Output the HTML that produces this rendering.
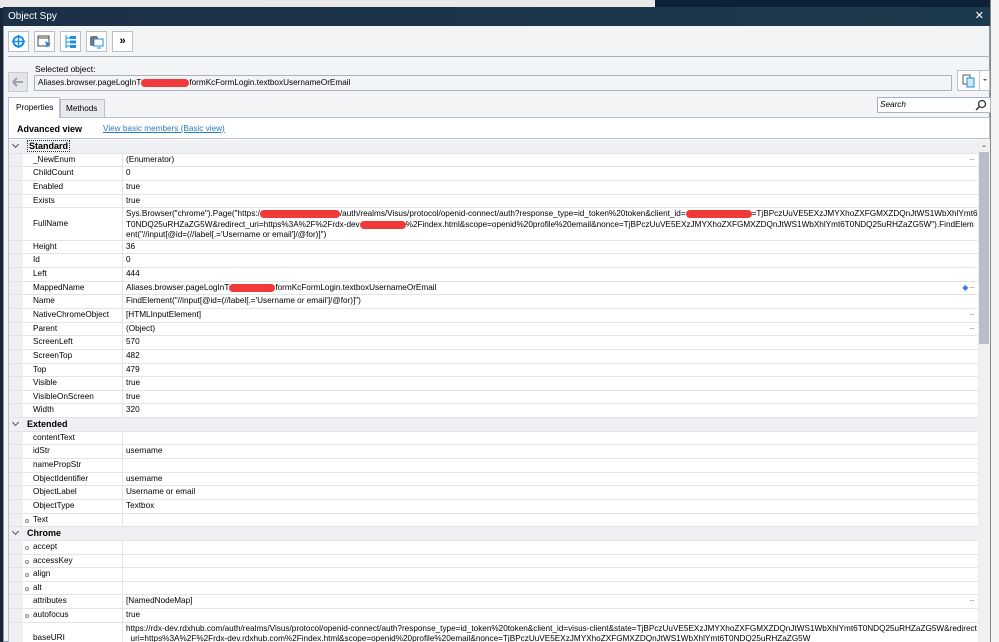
<!DOCTYPE html>
<html><head><meta charset="utf-8">
<style>
*{box-sizing:border-box;margin:0;padding:0}
html{width:999px;height:642px;overflow:hidden}
body{width:999px;height:642px;overflow:hidden;background:#e9e9e9;font-family:"Liberation Sans",Tahoma,sans-serif;font-size:8.2px;color:#000;position:relative}
.abs{position:absolute}
.red{display:inline-block;background:#f03a3a;border-radius:5px;height:8px;vertical-align:middle}
.btn{position:absolute;top:31px;width:21px;height:21px;background:#fff;border:1px solid #b9c0ca}
.grid{position:absolute;left:9px;top:140px;width:969px;height:502px;overflow:hidden}
.row{display:flex;height:13.65px;border-bottom:1px solid #e2e4e8;line-height:12.6px;white-space:nowrap;overflow:hidden}
.row .ind{width:14px;background:#eef0f3;flex:none}
.row .n{width:100px;flex:none;padding-left:10px;background:#fff;border-right:1px solid #e2e4e8;position:relative}
.row .v{flex:1;padding-left:3px;background:#fff;overflow:hidden;position:relative}
.row.tall{height:32.6px}
.row.tall .n{display:flex;align-items:center}
.row.tall .v{line-height:10.5px;padding-top:1px;white-space:normal;word-break:break-all}
.row.hd{background:#eef0f3}
.row.hd .h{font-weight:bold;padding-left:4px;font-size:9px}
.chev{position:absolute;left:4px;top:2px;width:5px;height:5px;border-right:1px solid #555;border-bottom:1px solid #555;transform:rotate(45deg)}
.dot{position:absolute;left:2px;top:5px;width:4px;height:4px;border:1px solid #888;border-radius:50%}
.dots{position:absolute;right:4px;top:0;color:#777;letter-spacing:-1px}
</style></head><body>
<div class="abs" style="left:655px;top:0;width:344px;height:8px;background:#0d2138"></div>
<div class="abs" style="left:0;top:8px;width:8px;height:634px;background:#1a2533"></div>
<div class="abs" style="left:990px;top:0;width:9px;height:642px;background:#f4f4f4;border-left:1px solid #888"></div>
<div class="abs" style="left:3px;top:7px;width:987px;height:635px;background:#f3f4f6;border:1px solid #8a97a6"></div>
<div class="abs" style="left:3px;top:7px;width:987px;height:19px;background:linear-gradient(90deg,#1c3048,#1c3a4d);color:#fff;font-size:10px;line-height:19px;padding-left:5px">Object Spy<span style="position:absolute;right:6px;top:0;font-size:11px">✕</span></div>
<div class="btn" style="left:8px"><svg width="19" height="19" viewBox="0 0 19 19"><circle cx="9.5" cy="9.5" r="5" fill="none" stroke="#1a8fe0" stroke-width="2"/><path d="M9.5 3v13M3 9.5h13" stroke="#1a8fe0" stroke-width="1.5"/></svg></div>
<div class="btn" style="left:34px"><svg width="19" height="19"><rect x="3" y="4" width="11" height="10" fill="none" stroke="#444"/><path d="M3 6h11" stroke="#444"/><path d="M10 9l6 3-3 1-1 3z" fill="#1a8fe0"/></svg></div>
<div class="btn" style="left:60px"><svg width="19" height="19"><path d="M5 3v13M5 6h4M5 10h4M5 14h4" stroke="#1a8fe0"/><rect x="9" y="4" width="6" height="3" fill="#1a8fe0"/><rect x="9" y="8.5" width="6" height="3" fill="#1a8fe0"/><rect x="9" y="13" width="6" height="3" fill="#1a8fe0"/></svg></div>
<div class="btn" style="left:86px"><svg width="19" height="19"><rect x="3" y="4" width="8" height="10" rx="2" fill="#777"/><rect x="7" y="7" width="9" height="7" fill="#fff" stroke="#1a8fe0"/><path d="M10 16h4" stroke="#1a8fe0"/></svg></div>
<div class="btn" style="left:112px;font-size:11px;font-weight:bold;text-align:center;line-height:18px">»</div>
<div class="abs" style="left:8px;top:56px;width:982px;height:1px;background:#a9b3c0"></div>
<div class="abs" style="left:35px;top:64px;font-size:8.5px">Selected object:</div>
<div class="abs" style="left:8px;top:72px;width:20px;height:20px;background:#e3e5e8;border:1px solid #c6cbd2"><svg width="18" height="18"><path d="M4 9h10M4 9l4-4M4 9l4 4" stroke="#9aa3ad" stroke-width="2" fill="none"/></svg></div>
<div class="abs" style="left:34px;top:75px;width:918px;height:16px;background:#f3f4f6;border:1px solid #a9b3c0;line-height:14px;padding-left:3px">Aliases.browser.pageLogInT<span class="red" style="width:48px"></span>formKcFormLogin.textboxUsernameOrEmail</div>
<div class="abs" style="left:957px;top:70px;width:33px;height:21px;background:#fff;border:1px solid #b9c0ca"><svg width="20" height="19" style="position:absolute;left:1px;top:0"><rect x="4" y="4" width="7" height="9" fill="#fff" stroke="#555"/><rect x="8" y="7" width="7" height="9" fill="#cfeaff" stroke="#1a8fe0"/></svg><div style="position:absolute;left:21px;top:0;width:1px;height:19px;background:#ccc"></div><div style="position:absolute;left:25px;top:8px;border:2.5px solid transparent;border-top-color:#555"></div></div>
<div class="abs" style="left:8px;top:97px;width:52px;height:21px;background:#fff;border:1px solid #b9c0ca;border-bottom:none;line-height:20px;padding-left:7px;z-index:2">Properties</div>
<div class="abs" style="left:60px;top:99px;width:45px;height:19px;background:#e8eaed;border:1px solid #b9c0ca;line-height:18px;padding-left:5px">Methods</div>
<div class="abs" style="left:877px;top:97px;width:114px;height:16px;background:#fff;border:1px solid #a9b3c0;font-style:italic;line-height:14px;padding-left:2px">Search<svg width="12" height="12" style="position:absolute;right:3px;top:1px"><circle cx="7" cy="5" r="3.5" fill="none" stroke="#333" stroke-width="1.3"/><path d="M4.5 7.5L1 11" stroke="#333" stroke-width="1.5"/></svg></div>
<div class="abs" style="left:8px;top:117px;width:982px;height:525px;background:#fff;border:1px solid #b9c0ca"></div>
<div class="abs" style="left:17px;top:124px;font-weight:bold;font-size:9px">Advanced view</div>
<div class="abs" style="left:103px;top:124px;color:#2a7bc0;text-decoration:underline">View basic members (Basic view)</div>
<div class="abs" style="left:9px;top:138px;width:980px;height:1px;background:#b9c0ca"></div>
<div class="abs" style="left:978px;top:139px;width:12px;height:503px;background:#f0f0f0"></div>
<div class="abs" style="left:982px;top:143px;border:2.5px solid transparent;border-bottom-color:#888"></div>
<div class="abs" style="left:979px;top:152px;width:10px;height:192px;background:#b9bec6"></div>
<div class="grid">
<div class="row hd"><div class="ind" style="position:relative"><span class="chev"></span></div><div class="h"><span style="border:1px dotted #333;padding:0 1px">Standard</span></div></div>
<div class="row"><div class="ind"></div><div class="n">_NewEnum</div><div class="v">(Enumerator)<span class="dots">···</span></div></div>
<div class="row"><div class="ind"></div><div class="n">ChildCount</div><div class="v">0</div></div>
<div class="row"><div class="ind"></div><div class="n">Enabled</div><div class="v">true</div></div>
<div class="row"><div class="ind"></div><div class="n">Exists</div><div class="v">true</div></div>
<div class="row tall"><div class="ind"></div><div class="n">FullName</div><div class="v">Sys.Browser("chrome").Page("https:/<span class="red" style="width:80px"></span>/auth/realms/Visus/protocol/openid-connect/auth?response_type=id_token%20token&amp;client_id=<span class="red" style="width:66px"></span>=TjBPczUuVE5EXzJMYXhoZXFGMXZDQnJtWS1WbXhlYmt6T0NDQ25uRHZaZG5W&amp;redirect_uri=https%3A%2F%2Frdx-dev<span class="red" style="width:46px"></span>%2Findex.html&amp;scope=openid%20profile%20email&amp;nonce=TjBPczUuVE5EXzJMYXhoZXFGMXZDQnJtWS1WbXhlYmt6T0NDQ25uRHZaZG5W").FindElement("//input[@id=(//label[.='Username or email']/@for)]")</div></div>
<div class="row"><div class="ind"></div><div class="n">Height</div><div class="v">36</div></div>
<div class="row"><div class="ind"></div><div class="n">Id</div><div class="v">0</div></div>
<div class="row"><div class="ind"></div><div class="n">Left</div><div class="v">444</div></div>
<div class="row"><div class="ind"></div><div class="n">MappedName</div><div class="v">Aliases.browser.pageLogInT<span class="red" style="width:46px"></span>formKcFormLogin.textboxUsernameOrEmail<span class="dots"><span style="color:#3a7fe0">◆</span> ···</span></div></div>
<div class="row"><div class="ind"></div><div class="n">Name</div><div class="v">FindElement("//input[@id=(//label[.='Username or email']/@for)]")</div></div>
<div class="row"><div class="ind"></div><div class="n">NativeChromeObject</div><div class="v">[HTMLInputElement]<span class="dots">···</span></div></div>
<div class="row"><div class="ind"></div><div class="n">Parent</div><div class="v">(Object)<span class="dots">···</span></div></div>
<div class="row"><div class="ind"></div><div class="n">ScreenLeft</div><div class="v">570</div></div>
<div class="row"><div class="ind"></div><div class="n">ScreenTop</div><div class="v">482</div></div>
<div class="row"><div class="ind"></div><div class="n">Top</div><div class="v">479</div></div>
<div class="row"><div class="ind"></div><div class="n">Visible</div><div class="v">true</div></div>
<div class="row"><div class="ind"></div><div class="n">VisibleOnScreen</div><div class="v">true</div></div>
<div class="row"><div class="ind"></div><div class="n">Width</div><div class="v">320</div></div>
<div class="row hd"><div class="ind" style="position:relative"><span class="chev"></span></div><div class="h">Extended</div></div>
<div class="row"><div class="ind"></div><div class="n">contentText</div><div class="v"></div></div>
<div class="row"><div class="ind"></div><div class="n">idStr</div><div class="v">username</div></div>
<div class="row"><div class="ind"></div><div class="n">namePropStr</div><div class="v"></div></div>
<div class="row"><div class="ind"></div><div class="n">ObjectIdentifier</div><div class="v">username</div></div>
<div class="row"><div class="ind"></div><div class="n">ObjectLabel</div><div class="v">Username or email</div></div>
<div class="row"><div class="ind"></div><div class="n">ObjectType</div><div class="v">Textbox</div></div>
<div class="row"><div class="ind"></div><div class="n"><span class="dot"></span>Text</div><div class="v"></div></div>
<div class="row hd"><div class="ind" style="position:relative"><span class="chev"></span></div><div class="h">Chrome</div></div>
<div class="row"><div class="ind"></div><div class="n"><span class="dot"></span>accept</div><div class="v"></div></div>
<div class="row"><div class="ind"></div><div class="n"><span class="dot"></span>accessKey</div><div class="v"></div></div>
<div class="row"><div class="ind"></div><div class="n"><span class="dot"></span>align</div><div class="v"></div></div>
<div class="row"><div class="ind"></div><div class="n"><span class="dot"></span>alt</div><div class="v"></div></div>
<div class="row"><div class="ind"></div><div class="n">attributes</div><div class="v">[NamedNodeMap]<span class="dots">···</span></div></div>
<div class="row"><div class="ind"></div><div class="n"><span class="dot"></span>autofocus</div><div class="v">true</div></div>
<div class="row tall"><div class="ind"></div><div class="n">baseURI</div><div class="v">https://rdx-dev.rdxhub.com/auth/realms/Visus/protocol/openid-connect/auth?response_type=id_token%20token&amp;client_id=visus-client&amp;state=TjBPczUuVE5EXzJMYXhoZXFGMXZDQnJtWS1WbXhlYmt6T0NDQ25uRHZaZG5W&amp;redirect_uri=https%3A%2F%2Frdx-dev.rdxhub.com%2Findex.html&amp;scope=openid%20profile%20email&amp;nonce=TjBPczUuVE5EXzJMYXhoZXFGMXZDQnJtWS1WbXhlYmt6T0NDQ25uRHZaZG5W</div></div>
</div>
</body></html>
